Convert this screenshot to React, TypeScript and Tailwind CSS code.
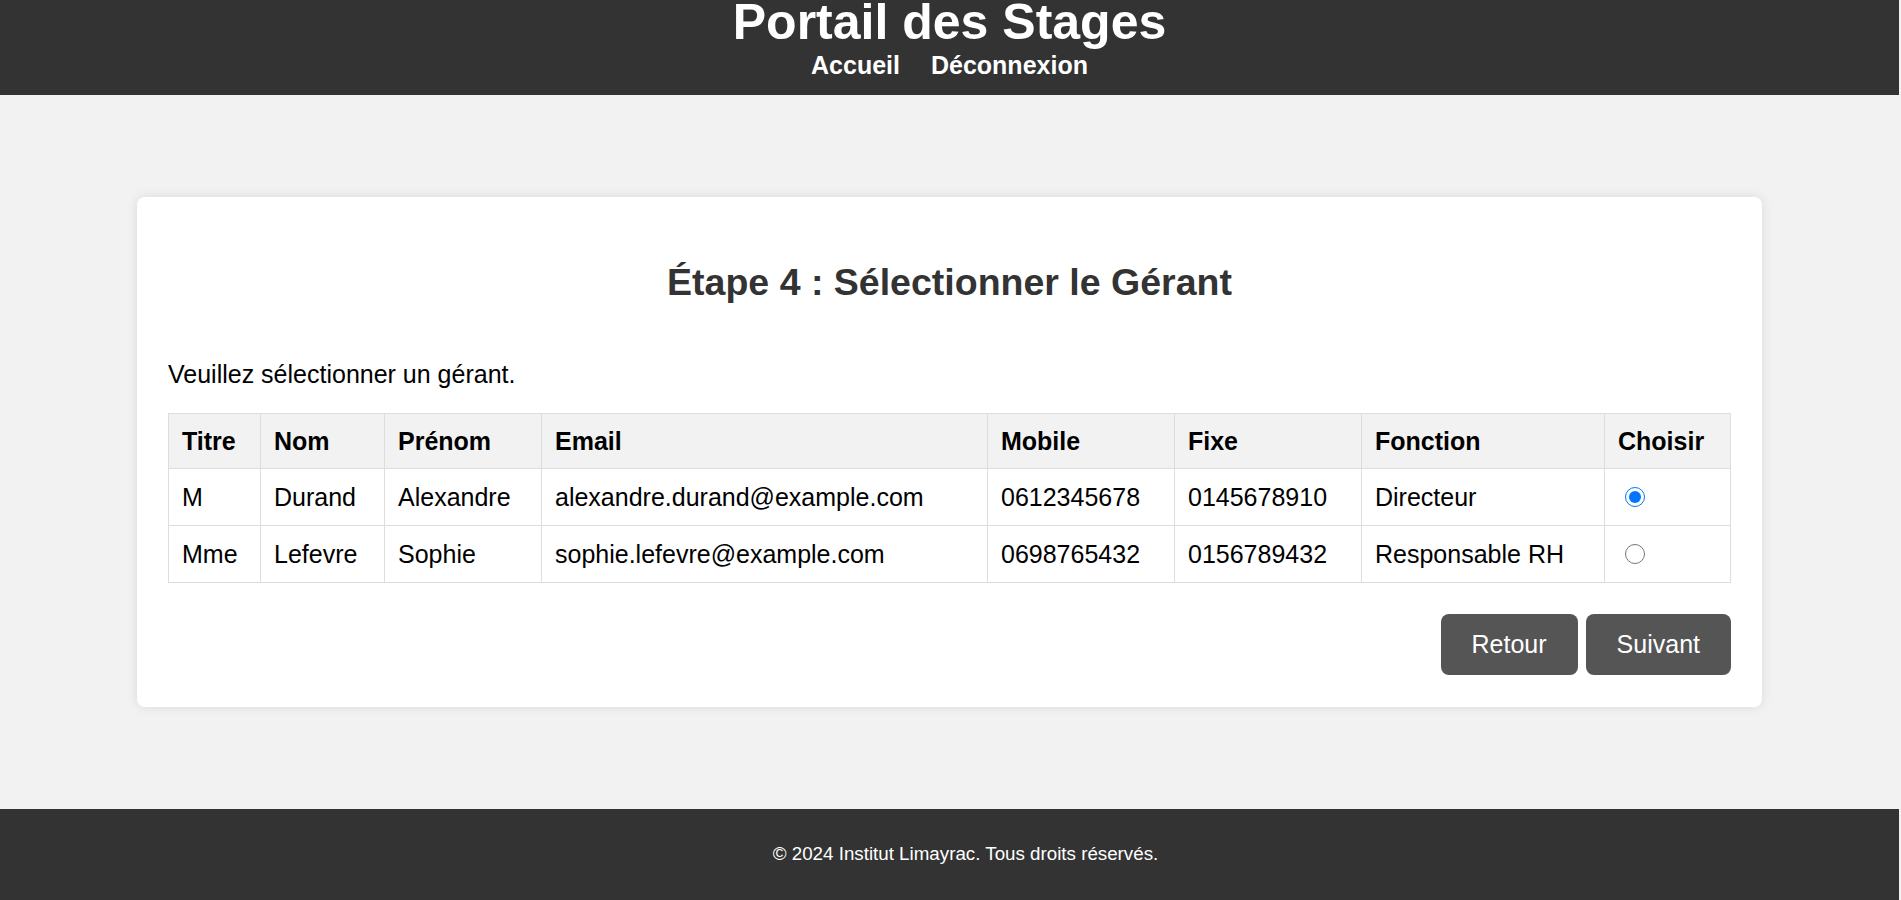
import { useState } from 'react'

const gerants = [
  {
    id: 1,
    titre: 'M',
    nom: 'Durand',
    prenom: 'Alexandre',
    email: 'alexandre.durand@example.com',
    mobile: '0612345678',
    fixe: '0145678910',
    fonction: 'Directeur',
  },
  {
    id: 2,
    titre: 'Mme',
    nom: 'Lefevre',
    prenom: 'Sophie',
    email: 'sophie.lefevre@example.com',
    mobile: '0698765432',
    fixe: '0156789432',
    fonction: 'Responsable RH',
  },
]

const colonnes = ['Titre', 'Nom', 'Prénom', 'Email', 'Mobile', 'Fixe', 'Fonction', 'Choisir']

export default function App() {
  const [choix, setChoix] = useState(1)

  return (
    <div className="min-h-screen bg-[#f2f2f2] font-['Liberation_Sans',Arial,sans-serif] text-[25px]">
      <div className="w-[1899px]">
        {/* Header */}
        <header className="h-[95px] bg-[#333] text-white text-center">
          <h1 className="text-[50px] font-bold leading-[44px]">Portail des Stages</h1>
          <nav className="mt-[7px] flex justify-center gap-[31px] font-bold leading-[29px]">
            <a href="#" className="text-white">Accueil</a>
            <a href="#" className="text-white">Déconnexion</a>
          </nav>
        </header>

        {/* Contenu */}
        <main className="pt-[102px] pb-[102px] px-[137px]">
          <div className="bg-white rounded-[8px] shadow-[0_0_12px_rgba(0,0,0,0.1)] px-[31px] pt-[31px] pb-[32px]">
            <h2 className="mt-[33px] text-center text-[37.5px] font-bold leading-[43px] text-[#333]">
              Étape 4 : Sélectionner le Gérant
            </h2>
            <p className="mt-[56px] leading-[29px] text-black">Veuillez sélectionner un gérant.</p>

            <table className="mt-[24px] w-full table-fixed border-collapse text-black">
              <colgroup>
                <col className="w-[92px]" />
                <col className="w-[124px]" />
                <col className="w-[157px]" />
                <col className="w-[446px]" />
                <col className="w-[187px]" />
                <col className="w-[187px]" />
                <col className="w-[243px]" />
                <col />
              </colgroup>
              <thead>
                <tr className="bg-[#f2f2f2]">
                  {colonnes.map((c) => (
                    <th
                      key={c}
                      className="h-[55px] border border-[#ddd] px-[13px] text-left font-bold leading-[29px]"
                    >
                      {c}
                    </th>
                  ))}
                </tr>
              </thead>
              <tbody>
                {gerants.map((g) => (
                  <tr key={g.id}>
                    <td className="h-[57px] border border-[#ddd] px-[13px] leading-[29px]">{g.titre}</td>
                    <td className="h-[57px] border border-[#ddd] px-[13px] leading-[29px]">{g.nom}</td>
                    <td className="h-[57px] border border-[#ddd] px-[13px] leading-[29px]">{g.prenom}</td>
                    <td className="h-[57px] border border-[#ddd] px-[13px] leading-[29px]">{g.email}</td>
                    <td className="h-[57px] border border-[#ddd] px-[13px] leading-[29px]">{g.mobile}</td>
                    <td className="h-[57px] border border-[#ddd] px-[13px] leading-[29px]">{g.fixe}</td>
                    <td className="h-[57px] border border-[#ddd] px-[13px] leading-[29px]">{g.fonction}</td>
                    <td className="h-[57px] border border-[#ddd] px-[12px]">
                      <input
                        type="radio"
                        name="gerant"
                        checked={choix === g.id}
                        onChange={() => setChoix(g.id)}
                        className="ml-[8px] block h-[20px] w-[20px] accent-[#0075ff]"
                      />
                    </td>
                  </tr>
                ))}
              </tbody>
            </table>

            <div className="mt-[31px] flex justify-end gap-[8px]">
              <button className="h-[61px] rounded-[8px] bg-[#555] px-[31px] text-white">Retour</button>
              <button className="h-[61px] rounded-[8px] bg-[#555] px-[31px] text-white">Suivant</button>
            </div>
          </div>
        </main>

        {/* Footer */}
        <footer className="flex h-[93px] items-center justify-center bg-[#333] pl-[32px] pb-[2px] text-[18.75px] text-white">
          © 2024 Institut Limayrac. Tous droits réservés.
        </footer>
      </div>
    </div>
  )
}
